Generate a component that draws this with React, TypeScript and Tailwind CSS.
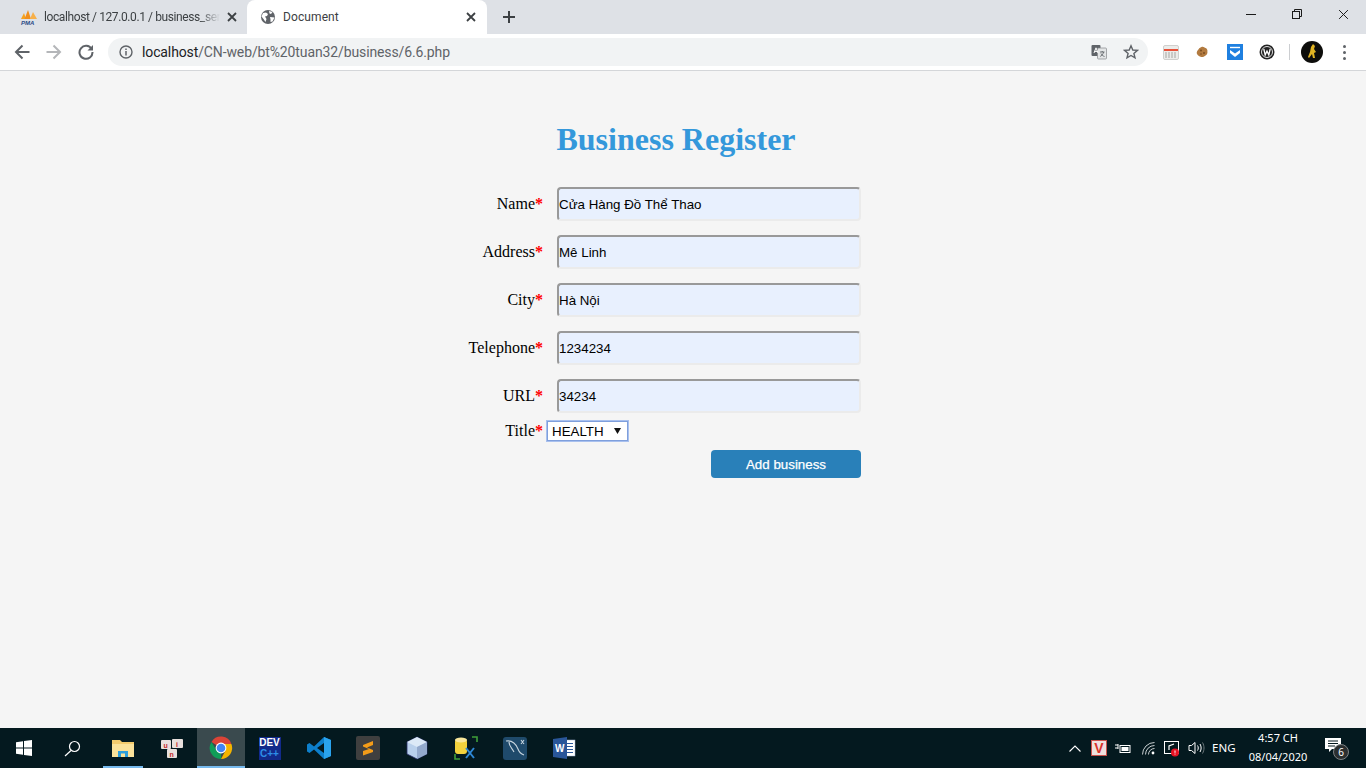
import React from "react";

const sans = "font-['Roboto',sans-serif]";

function Pma() {
  return (
    <svg width="18" height="16" viewBox="0 0 18 16">
      <path d="M1 10 L4 4 L6 10Z" fill="#f6a21e" />
      <path d="M4.5 10 L8 1 L11 10Z" fill="#f18f1c" />
      <path d="M10 10 L13 3 L17 10Z" fill="#f7b04a" />
      <text x="1" y="15.5" fontSize="6" fontWeight="700" fontStyle="italic" fill="#2b4a86" fontFamily="Liberation Sans">PMA</text>
    </svg>
  );
}

function Globe() {
  return (
    <svg width="16" height="16" viewBox="0 0 16 16">
      <circle cx="8" cy="8" r="7" fill="#5f6368" />
      <path d="M3 4 L6 3.5 L8 5 L7 7 L5 7.5 L6.5 10 L5.5 13 L3.5 10 L1.5 7.5Z M9 2 L12.5 3 L11 5 L9.5 4.5Z M10 8 L14.5 8.5 L12.5 12.5 L10.5 13 L10.5 10.5Z" fill="#fff" />
    </svg>
  );
}

function X({ size = 10, color = "#3c4043", sw = 1.8 }: { size?: number; color?: string; sw?: number }) {
  return (
    <svg width={size} height={size} viewBox="0 0 10 10">
      <path d="M1 1 L9 9 M9 1 L1 9" stroke={color} strokeWidth={sw} fill="none" />
    </svg>
  );
}

function Arrow({ color, flip }: { color: string; flip?: boolean }) {
  return (
    <svg width="16" height="16" viewBox="0 0 16 16" className={flip ? "rotate-180" : ""}>
      <path d="M15.5 8 H2 M8.5 1.5 L2 8 L8.5 14.5" stroke={color} strokeWidth="2" fill="none" />
    </svg>
  );
}

function Field({ label, value, last }: { label: string; value: string; last?: boolean }) {
  return (
    <div className={`flex items-center h-[34px] ${last ? "mb-[8px]" : "mb-[14px]"}`}>
      <label className="w-[543px] text-right text-[16px] leading-none text-black shrink-0">
        {label}
        <span className="text-[#ff0000] font-bold">*</span>
      </label>
      <input
        readOnly
        defaultValue={value}
        className="ml-[14px] w-[304px] h-[34px] rounded-[4px] bg-[#e8f0fe] text-black text-[13.33px] pl-0 font-['Liberation_Sans',sans-serif] border-2 border-solid border-t-[#999999] border-l-[#999999] border-r-[#ebebeb] border-b-[#ebebeb] outline-none"
      />
    </div>
  );
}

function TaskItem({ children, active, underline }: { children: React.ReactNode; active?: boolean; underline?: boolean }) {
  return (
    <div className={`relative h-full flex items-center justify-center ${active ? "bg-[#3a4a4e] w-[48px] ml-[1px]" : "w-[49px]"}`}>
      {children}
      {underline && <span className={`absolute bottom-0 h-[2px] bg-[#76b9ed] ${active ? "left-0 right-0" : "left-[5px] right-[4px]"}`} />}
    </div>
  );
}

export default function App() {
  return (
    <div className="w-[1366px] h-[768px] overflow-hidden flex flex-col bg-[#f5f5f5] font-['Liberation_Serif',serif]">
      {/* tab strip */}
      <div className={`h-[34px] shrink-0 bg-[#dee1e6] flex items-stretch ${sans}`}>
        <div className="w-[247px] pl-[20px] pr-[10px] flex items-center shrink-0">
          <Pma />
          <span className="ml-[6px] w-[176px] overflow-hidden whitespace-nowrap text-[12px] tracking-[-0.4px] text-[#3c4043] [mask-image:linear-gradient(to_right,black_155px,transparent_176px)]">
            localhost / 127.0.0.1 / business_server
          </span>
          <span className="ml-[7px] flex"><X /></span>
        </div>
        <div className="w-[240px] bg-white rounded-t-[8px] pl-[13px] pr-[11px] flex items-center shrink-0">
          <Globe />
          <span className="ml-[7px] flex-1 text-[12px] tracking-[0.1px] text-[#3c4043]">Document</span>
          <X />
        </div>
        <div className="ml-[15px] flex items-center">
          <svg width="14" height="14" viewBox="0 0 14 14"><path d="M7 1 V13 M1 7 H13" stroke="#3c4043" strokeWidth="2" /></svg>
        </div>
        <div className="ml-auto flex items-center h-full pb-[6px]">
          <div className="w-[46px] flex justify-center"><svg width="10" height="10" viewBox="0 0 10 10"><path d="M0 5.5 H10" stroke="#1a1a1a" strokeWidth="1" /></svg></div>
          <div className="w-[46px] flex justify-center"><svg width="10" height="10" viewBox="0 0 10 10" fill="none" stroke="#1a1a1a"><rect x="0.5" y="2.5" width="7" height="7" /><path d="M2.5 2.5 V0.5 H9.5 V7.5 H7.5" /></svg></div>
          <div className="w-[46px] flex justify-center"><X size={11} color="#1a1a1a" sw={0.9} /></div>
        </div>
      </div>

      {/* toolbar */}
      <div className={`h-[37px] shrink-0 bg-white border-b border-[#d4d6d9] flex items-center ${sans}`}>
        <div className="w-[108px] shrink-0 flex items-center pl-[14px] gap-[16px]">
          <Arrow color="#5f6368" />
          <Arrow color="#b4b6b9" flip />
          <svg width="16" height="16" viewBox="0 0 16 16" fill="none">
            <path d="M13.6 5 A6.5 6.5 0 1 0 14.5 8" stroke="#5f6368" strokeWidth="2" />
            <path d="M15 1 V6.5 H9.5Z" fill="#5f6368" />
          </svg>
        </div>
        <div className="w-[1040px] h-[28px] shrink-0 rounded-full bg-[#f1f3f4] flex items-center pl-[11px] pr-[9px]">
          <svg width="14" height="14" viewBox="0 0 14 14" fill="none">
            <circle cx="7" cy="7" r="6" stroke="#5f6368" strokeWidth="1.4" />
            <path d="M7 6 V10.5 M7 3.5 V5" stroke="#5f6368" strokeWidth="1.5" />
          </svg>
          <span className="ml-[9px] text-[14px] text-[#5f6368] tracking-[-0.12px] whitespace-nowrap">
            <span className="text-[#202124]">localhost</span>/CN-web/bt%20tuan32/business/6.6.php
          </span>
          <div className="ml-auto flex items-center gap-[16px]">
            <svg width="16" height="16" viewBox="0 0 16 16">
              <rect x="0.5" y="1" width="9" height="11" rx="1" fill="#5f6368" />
              <rect x="6.5" y="4" width="9" height="11" rx="1" fill="#e3e5e6" stroke="#85888b" strokeWidth="0.7" />
              <path d="M3 9 L5 3.8 L7 9 M3.6 7.4 H6.4" stroke="#fff" strokeWidth="1" fill="none" />
              <path d="M9 8 H13.5 M11.2 7 V8 M12.6 8 C12.2 10 10.5 12 9.2 12.4 M10 9.5 C10.6 11 12 12 13.5 12.5" stroke="#5f6368" strokeWidth="0.9" fill="none" />
            </svg>
            <svg width="16" height="16" viewBox="0 0 16 16" fill="none">
              <path d="M8 1.8 L9.8 6 L14.4 6.4 L10.9 9.4 L12 13.9 L8 11.5 L4 13.9 L5.1 9.4 L1.6 6.4 L6.2 6Z" stroke="#5f6368" strokeWidth="1.4" />
            </svg>
          </div>
        </div>
        <div className="flex items-center ml-[15px]">
          <div className="w-[16px] h-[15px] rounded-[2px] bg-[#ececea] border border-[#d0d0ce] relative overflow-hidden flex flex-col gap-[1px] items-center">
            <span className="block w-full h-[2px] mt-[3px] bg-[#e8523a]" />
            <span className="block w-[12px] h-[6px] bg-[repeating-linear-gradient(90deg,#c9c9c6_0_2px,#ececea_2px_3px)]" />
          </div>
          <svg className="ml-[17px]" width="12" height="12" viewBox="0 0 12 12">
            <path d="M6 0.8 C7.5 0.2 8.4 1.6 9.6 2 C11 2.6 11.6 4 11.4 5.4 C11.6 7 11.2 8.6 9.6 9.6 C8.4 10.6 7 11.4 5.2 11 C3.4 10.6 1.4 9.6 0.8 7.6 C0.4 5.8 1.4 4.6 2.6 3.2 C3.4 2 4.6 1.2 6 0.8Z" fill="#b27a3f" />
            <circle cx="5" cy="4.5" r="1" fill="#7a4d22" /><circle cx="8" cy="7" r="1" fill="#7a4d22" /><circle cx="5" cy="8" r="0.8" fill="#7a4d22" />
          </svg>
          <svg className="ml-[19px]" width="16" height="16" viewBox="0 0 16 16">
            <rect width="16" height="16" fill="#1f80e0" />
            <path d="M3 3.5 H13" stroke="#fff" strokeWidth="1.4" />
            <path d="M3 6 V9 L8 13 L13 9 V6 L8 9.6Z" fill="#fff" />
          </svg>
          <svg className="ml-[16px]" width="16" height="16" viewBox="0 0 16 16">
            <circle cx="8" cy="8" r="7.5" fill="#222" />
            <circle cx="8" cy="8" r="5.5" fill="none" stroke="#ddd" strokeWidth="1" />
            <path d="M4.8 5 L6.2 11 L8 7 L9.8 11 L11.2 5" fill="none" stroke="#fff" strokeWidth="1.3" />
          </svg>
          <span className="ml-[14px] w-px h-[16px] bg-[#ccced1]" />
          <svg className="ml-[11px]" width="22" height="22" viewBox="0 0 22 22">
            <circle cx="11" cy="11" r="11" fill="#0d0d0b" />
            <path d="M12 3 L14 5 L13 8 L15 11 L13 12 L14 17 L12 17 L11 13 L8 17 L7 16 L9 11 L10 6Z" fill="#e1b423" />
          </svg>
          <div className="ml-[20px] flex flex-col gap-[3px]">
            <span className="block w-[3px] h-[3px] rounded-full bg-[#5f6368]" />
            <span className="block w-[3px] h-[3px] rounded-full bg-[#5f6368]" />
            <span className="block w-[3px] h-[3px] rounded-full bg-[#5f6368]" />
          </div>
        </div>
      </div>

      {/* page */}
      <main className="flex-1 min-h-0 flex flex-col">
        <h1 className="w-[1352px] mt-[50px] mb-[29px] text-center text-[32px] leading-[37px] font-bold text-[#3498db]">Business Register</h1>
        <Field label="Name" value="Cửa Hàng Đồ Thể Thao" />
        <Field label="Address" value="Mê Linh" />
        <Field label="City" value="Hà Nội" />
        <Field label="Telephone" value="1234234" />
        <Field label="URL" value="34234" last />
        <div className="flex items-center h-[20px]">
          <label className="w-[543px] text-right text-[16px] leading-none text-black shrink-0">
            Title<span className="text-[#ff0000] font-bold">*</span>
          </label>
          <div className="ml-[4px] w-[81px] h-[20px] pt-[1px] bg-white border border-[#7f9fdc] outline outline-[0.5px] outline-[#a8c0ee] flex items-center pl-[4px] pr-[5px] font-['Liberation_Sans',sans-serif] text-[13.33px] leading-none text-black">
            HEALTH
            <svg className="ml-auto mr-[1px] mb-[1px]" width="7" height="6" viewBox="0 0 7 6"><path d="M0 0 H7 L3.5 6Z" fill="#111" /></svg>
          </div>
        </div>
        <div className="flex mt-[9px]">
          <button className="ml-[711px] w-[150px] h-[28px] pt-[1px] rounded-[4px] bg-[#2980b9] text-white text-[13.33px] [-webkit-text-stroke:0.25px_white] font-['Liberation_Sans',sans-serif] font-normal">
            Add business
          </button>
        </div>
      </main>

      {/* taskbar */}
      <div className="h-[40px] shrink-0 bg-[#04191f] flex items-stretch font-['Noto_Sans',sans-serif]">
        <div className="w-[47px] flex items-center justify-center pb-[1px]">
          <svg width="16" height="16" viewBox="0 0 16 16" fill="#fff"><path d="M0 2.2 L7 1.2 V7.4 H0Z M8 1.1 L16 0 V7.4 H8Z M0 8.4 H7 V14.7 L0 13.8Z M8 8.4 H16 V16 L8 14.9Z" /></svg>
        </div>
        <div className="w-[51px] flex items-center justify-center">
          <svg width="17" height="17" viewBox="0 0 17 17" fill="none" stroke="#fff" strokeWidth="1.2"><circle cx="10.5" cy="6.5" r="5" /><path d="M7 10.5 L1 16" /></svg>
        </div>
        <TaskItem underline>
          <svg width="22" height="20" viewBox="0 0 22 20">
            <path d="M0 2 H8 L10 4 H22 V19 H0Z" fill="#f3cb6d" />
            <path d="M0 6 H22 V19 H0Z" fill="#fbe29a" />
            <path d="M6 13 H16 V19 H13 V15.5 H9 V19 H6Z" fill="#2e9fdc" />
          </svg>
        </TaskItem>
        <TaskItem>
          <svg width="24" height="22" viewBox="0 0 24 22">
            <rect x="1" y="3" width="10" height="9" rx="1" fill="#e8e0dd" /><rect x="12" y="2" width="11" height="9" rx="1" fill="#e8e0dd" /><rect x="7" y="12" width="10" height="9" rx="1" fill="#e8e0dd" />
            <text x="3.5" y="10.5" fontSize="7" fontWeight="700" fill="#c32a2a" fontFamily="Liberation Sans">u</text>
            <text x="16" y="9.5" fontSize="7" fontWeight="700" fill="#c32a2a" fontFamily="Liberation Sans">i</text>
            <text x="9.5" y="19.5" fontSize="7" fontWeight="700" fill="#c32a2a" fontFamily="Liberation Sans">n</text>
          </svg>
        </TaskItem>
        <TaskItem active underline>
          <svg width="24" height="24" viewBox="0 0 24 24">
            <path d="M12 12 L2.5 6 A11 11 0 0 1 22.4 8 H12Z" fill="#db4437" />
            <path d="M12 23 A11 11 0 0 1 2.5 6 L7.5 14.5 L12 12Z" fill="#0f9d58" />
            <path d="M12 23 A11 11 0 0 0 22.4 8 H12 L16.5 14.5Z" fill="#f4b400" />
            <circle cx="12" cy="12" r="5.4" fill="#fff" /><circle cx="12" cy="12" r="4.3" fill="#4285f4" />
          </svg>
        </TaskItem>
        <TaskItem>
          <div className="w-[22px] h-[23px] bg-[#122a8a] flex flex-col items-center justify-start font-['Liberation_Sans',sans-serif] font-bold leading-none text-[10px] pt-[1px]">
            <span className="text-white">DEV</span>
            <span className="text-[#2d8fe8] text-[10px] mt-[1px]">C++</span>
          </div>
        </TaskItem>
        <TaskItem>
          <svg width="24" height="24" viewBox="0 0 24 24">
            <path d="M17 1 L24 4 V20 L17 23 L7 13.5 L2.5 17 L0 15.5 V8.5 L2.5 7 L7 10.5Z" fill="#0d7fcc" />
            <path d="M17 1 L24 4 V20 L17 23Z" fill="#2aa3ee" />
            <path d="M17 7 L10 12 L17 17Z" fill="#04191f" />
          </svg>
        </TaskItem>
        <TaskItem>
          <div className="w-[24px] h-[24px] rounded-[2px] bg-[#3f3f3f] flex items-center justify-center">
            <svg width="12" height="16" viewBox="0 0 12 16"><path d="M1 5 L11 1 V5 L5 7.5 L11 10 V12 L1 15.5 V11 L7 9 L1 6.5Z" fill="#f39c19" /></svg>
          </div>
        </TaskItem>
        <TaskItem>
          <svg width="22" height="24" viewBox="0 0 22 24">
            <path d="M11 1 L21 6 V18 L11 23 L1 18 V6Z" fill="#b9d0ec" stroke="#2a2f6a" strokeWidth="0.8" />
            <path d="M11 1 L21 6 L11 11 L1 6Z" fill="#dce9f7" />
            <path d="M11 11 L21 6 V18 L11 23Z" fill="#93a9cc" />
          </svg>
        </TaskItem>
        <TaskItem>
          <svg width="24" height="24" viewBox="0 0 24 24">
            <rect x="1" y="3" width="12" height="15" rx="3" fill="#f3d23c" />
            <ellipse cx="7" cy="4" rx="6" ry="2.5" fill="#f9e79b" />
            <path d="M18 1 H23 V6 M1 18 V23 H6" stroke="#3f9e3a" strokeWidth="1.6" fill="none" />
            <path d="M12 22 L20 12 M12 12 L20 22" stroke="#2e88d6" strokeWidth="2" />
          </svg>
        </TaskItem>
        <TaskItem>
          <svg width="24" height="23" viewBox="0 0 24 23">
            <rect width="24" height="23" rx="3" fill="#1f4a6b" />
            <path d="M3 4 C9 3 13 7 15 12 C16 15 18 17 21 18 M6 5 C6 9 9 11 11 15 M18 3 L21 7 M21 3 L18 7" stroke="#c7d5df" strokeWidth="1.1" fill="none" />
          </svg>
        </TaskItem>
        <TaskItem>
          <svg width="24" height="22" viewBox="0 0 24 22">
            <rect x="12" y="3" width="11" height="16" fill="#fff" stroke="#9eb2d1" strokeWidth="0.5" />
            <path d="M14 6.5 H21 M14 9.5 H21 M14 12.5 H21 M14 15.5 H21" stroke="#2a5699" />
            <path d="M1 2 L15 0 V22 L1 20Z" fill="#2a5699" />
            <text x="3" y="15" fontSize="10" fontWeight="700" fill="#fff" fontFamily="Liberation Sans">W</text>
          </svg>
        </TaskItem>

        <div className="ml-auto flex items-center">
          <svg width="12" height="7" viewBox="0 0 12 7" fill="none" stroke="#fff" strokeWidth="1.1"><path d="M0.5 6.5 L6 1 L11.5 6.5" /></svg>
          <div className="ml-[10px] w-[16px] h-[16px] bg-[#efe0de] border border-[#c9504a] flex items-center justify-center font-['Liberation_Sans',sans-serif] font-bold text-[14px] leading-none text-[#d8332c]">V</div>
          <svg className="ml-[8px]" width="16" height="11" viewBox="0 0 16 11">
            <path d="M0 2 H3 M0 5 H3 M3 1 V6" stroke="#fff" fill="none" />
            <rect x="5" y="2.5" width="10" height="7" fill="none" stroke="#fff" /><rect x="6.5" y="4" width="7" height="4" fill="#fff" />
          </svg>
          <svg className="ml-[11px]" width="13" height="13" viewBox="0 0 13 13" fill="none" stroke="#c9cfd1">
            <path d="M0.5 12.5 A12 12 0 0 1 12.5 0.5 M3.5 12.5 A9 9 0 0 1 12.5 3.5 M6.5 12.5 A6 6 0 0 1 12.5 6.5" />
            <circle cx="11" cy="11" r="1.4" fill="#fff" stroke="none" />
          </svg>
          <svg className="ml-[8px]" width="17" height="17" viewBox="0 0 17 17" fill="none">
            <rect x="1.5" y="1.5" width="14" height="12" stroke="#fff" />
            <path d="M6 10 V6 L11 4" stroke="#fff" strokeWidth="1.2" />
            <circle cx="12" cy="12.5" r="4" fill="#e81123" />
            <path d="M12 10.5 V12.8 M12 13.6 V14.5" stroke="#fff" />
          </svg>
          <svg className="ml-[8px]" width="17" height="14" viewBox="0 0 17 14" fill="none" stroke="#fff">
            <path d="M1 4.5 H3.5 L7 1.5 V12.5 L3.5 9.5 H1Z" />
            <path d="M9.5 4.5 C10.5 6 10.5 8 9.5 9.5 M12 3 C13.5 5.5 13.5 8.5 12 11" />
            <path d="M14.5 1.5 C16.5 5 16.5 9 14.5 12.5" stroke="#6f7a7e" />
          </svg>
          <span className="ml-[7px] w-[24px] text-[11.5px] text-white leading-none whitespace-nowrap">ENG</span>
          <div className="ml-[12px] w-[60px] pb-[2px] flex flex-col items-center text-[11px] leading-[19px] text-white whitespace-nowrap">
            <span>4:57 CH</span>
            <span>08/04/2020</span>
          </div>
          <div className="relative ml-[17px] mr-[23px] w-[18px] h-[24px]">
            <svg className="absolute left-0 top-[1px]" width="16" height="16" viewBox="0 0 16 16">
              <path d="M0 1 H16 V12 H7 L4 15 V12 H0Z" fill="#fff" />
              <path d="M3 4 H13 M3 6.5 H13 M3 9 H10" stroke="#04191f" />
            </svg>
            <span className="absolute left-[8px] top-[8px] w-[16px] h-[16px] rounded-full bg-[#2b2f30] border border-[#7d8385] flex items-center justify-center text-[10px] leading-none text-white">6</span>
          </div>
        </div>
      </div>
    </div>
  );
}
